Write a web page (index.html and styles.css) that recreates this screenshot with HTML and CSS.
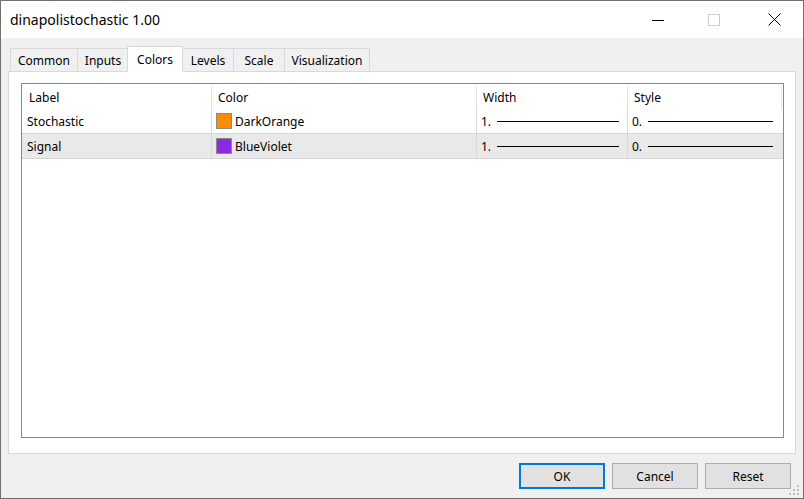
FILE: index.html
```html
<!DOCTYPE html>
<html lang="en">
<head>
  <meta charset="UTF-8">
  <meta name="viewport" content="width=device-width, initial-scale=1.0">
  <title>dinapolistochastic 1.00</title>
  <link rel="stylesheet" href="styles.css">
</head>
<body>

  <div class="window">
    <div class="titlebar">
      <span class="title">dinapolistochastic 1.00</span>
      <div class="controls">
        <span class="ctl">
          <svg width="12" height="12" viewBox="0 0 12 12"><path d="M0 6.5h12" stroke="#000" stroke-width="1"/></svg>
        </span>
        <span class="ctl ctl-max">
          <svg width="12" height="12" viewBox="0 0 12 12"><rect x="0.5" y="0.5" width="11" height="11" fill="none" stroke="#cccccc"/></svg>
        </span>
        <span class="ctl">
          <svg width="13" height="13" viewBox="0 0 13 13"><path d="M0.5 0.5l12 12M12.5 0.5l-12 12" stroke="#000" stroke-width="1"/></svg>
        </span>
      </div>
    </div>

    <div class="body">
      <div class="tabs">
        <span class="tab w-common">Common</span>
        <span class="tab w-small">Inputs</span>
        <span class="tab active">Colors</span>
        <span class="tab w-small">Levels</span>
        <span class="tab w-small">Scale</span>
        <span class="tab w-vis">Visualization</span>
      </div>

      <div class="panel">
        <div class="list">
          <div class="row head">
            <div class="cell c-label">Label</div>
            <div class="cell c-color">Color</div>
            <div class="cell c-width">Width</div>
            <div class="cell c-style">Style</div>
          </div>

          <div class="row">
            <div class="cell c-label">Stochastic</div>
            <div class="cell c-color"><span class="swatch orange"></span>DarkOrange</div>
            <div class="cell c-width">1.<span class="line w-line"></span></div>
            <div class="cell c-style">0.<span class="line s-line"></span></div>
          </div>

          <div class="row selected">
            <div class="cell c-label">Signal</div>
            <div class="cell c-color"><span class="swatch violet"></span>BlueViolet</div>
            <div class="cell c-width">1.<span class="line w-line"></span></div>
            <div class="cell c-style">0.<span class="line s-line"></span></div>
          </div>
        </div>
      </div>

      <div class="footer">
        <button type="button" class="btn default">OK</button>
        <button type="button" class="btn">Cancel</button>
        <button type="button" class="btn">Reset</button>
      </div>
    </div>

    <!-- grip no canto -->
    <svg class="grip" width="12" height="12" viewBox="0 0 12 12">
      <rect x="8" y="0" width="2" height="2" fill="#bcbcbc"/>
      <rect x="4" y="4" width="2" height="2" fill="#bcbcbc"/>
      <rect x="8" y="4" width="2" height="2" fill="#bcbcbc"/>
      <rect x="0" y="8" width="2" height="2" fill="#bcbcbc"/>
      <rect x="4" y="8" width="2" height="2" fill="#bcbcbc"/>
      <rect x="8" y="8" width="2" height="2" fill="#bcbcbc"/>
    </svg>
  </div>

</body>
</html>
```

FILE: styles.css
```css
* {
  margin: 0;
  padding: 0;
  box-sizing: border-box;
}

body {
  font-family: "Noto Sans", Arial, sans-serif;
  font-size: 12px;
  color: #000;
  background-color: #fff;
}

.window {
  position: relative;
  width: 804px;
  height: 499px;
  border: 1px solid #707070;
  display: flex;
  flex-direction: column;
}

.titlebar {
  height: 37px;
  background-color: #fff;
  display: flex;
  align-items: stretch;
  padding-left: 9px;
}

.title {
  flex: 1;
  align-self: center;
  font-size: 14px;
}

.controls {
  display: flex;
}

.ctl {
  width: 58px;
  display: flex;
  justify-content: center;
  align-items: center;
}

.ctl-max {
  width: 54px;
  margin-right: 4px;
}

.body {
  flex: 1;
  background-color: #f0f0f0;
  padding: 8px 7px 0 7px;
  display: flex;
  flex-direction: column;
}

.tabs {
  height: 25px;
  display: flex;
  align-items: flex-end;
  padding-left: 2px;
}

.tab {
  height: 23px;
  border: 1px solid #d9d9d9;
  border-bottom: none;
  margin-left: -1px;
  display: flex;
  justify-content: center;
  align-items: center;
  background-color: #f0f0f0;
}

.tab:first-child {
  margin-left: 0;
}

.w-common {
  width: 68px;
}

.w-small {
  width: 52px;
}

.w-vis {
  width: 86px;
}

.tab.active {
  position: relative;
  z-index: 1;
  width: 56px;
  height: 26px;
  margin-left: -2px;
  margin-bottom: -1px;
  padding-bottom: 1px;
  background-color: #fff;
}

.panel {
  height: 383px;
  background-color: #fff;
  border: 1px solid #d9d9d9;
  padding: 11px 11px 15px 12px;
}

.list {
  height: 100%;
  border: 1px solid #828790;
}

.row {
  display: flex;
  height: 25px;
  border-bottom: 1px solid #d5d5d5;
}

.row.head {
  border-bottom: none;
  padding-top: 1px;
}

.row.selected {
  background-color: #e9e9e9;
}

.cell {
  display: flex;
  align-items: center;
  border-right: 1px solid #d9d9d9;
  white-space: nowrap;
}

.head .cell {
  border-right-color: #e5e5e5;
}

.c-label {
  width: 190px;
  padding-left: 5px;
}

.c-color {
  width: 265px;
  padding-left: 4px;
}

.c-width {
  width: 151px;
  padding-left: 4px;
}

.c-style {
  width: 154px;
  padding-left: 4px;
  border-right: none;
}

.head .c-label {
  padding-left: 7px;
}

.head .c-color {
  padding-left: 6px;
}

.head .c-width,
.head .c-style {
  padding-left: 6px;
}

.head .c-style {
  border-right: 1px solid #e5e5e5;
}

.swatch {
  width: 16px;
  height: 16px;
  border: 1px solid #8a8a8a;
  margin-right: 3px;
}

.orange {
  background-color: #ff8c00;
}

.violet {
  background-color: #8a2be2;
}

.line {
  height: 1px;
  background-color: #000;
  margin-left: auto;
}

.w-line {
  width: 122px;
  margin-right: 8px;
}

.s-line {
  width: 125px;
  margin-right: 9px;
}

.footer {
  display: flex;
  justify-content: flex-end;
  gap: 7px;
  padding: 9px 5px 0 0;
}

.btn {
  width: 86px;
  height: 26px;
  background-color: #e1e1e1;
  border: 1px solid #adadad;
  font-family: "Noto Sans", Arial, sans-serif;
  font-size: 12px;
  color: #000;
}

.btn.default {
  border: 2px solid #0078d7;
}

.grip {
  position: absolute;
  right: 2px;
  bottom: 1px;
}
```
